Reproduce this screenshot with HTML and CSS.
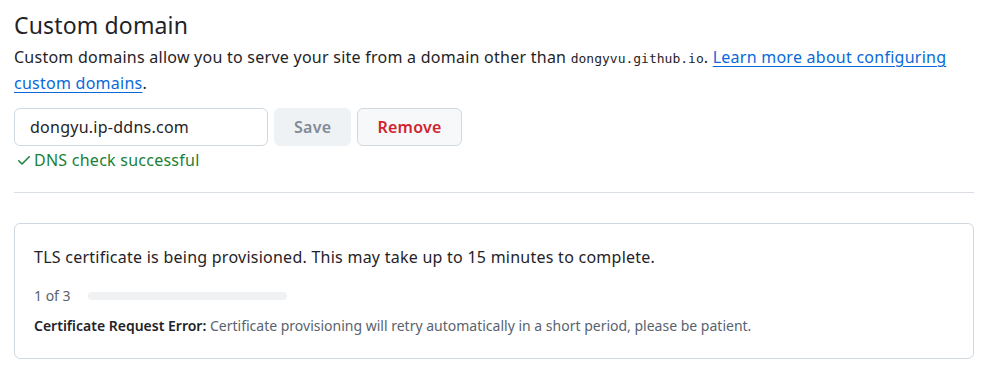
FILE: index.html
```html
<!DOCTYPE html>
<html lang="en">
<head>
  <meta charset="UTF-8">
  <title>Custom domain</title>
  <link rel="stylesheet" href="styles.css">
</head>
<body>
  <div class="container">
    <h2 class="title">Custom domain</h2>
    <p class="description">
      Custom domains allow you to serve your site from a domain other than <code>dongyvu.github.io</code>.
      <a href="#">Learn more about configuring custom domains</a>.
    </p>

    <form class="domain-form" onsubmit="return false;">
      <div class="domain-row">
        <input type="text" class="domain-input" value="dongyu.ip-ddns.com">
        <button type="submit" class="btn" disabled>Save</button>
        <button type="button" class="btn btn-danger">Remove</button>
      </div>
      <div class="dns-status">
        <svg class="check-icon" viewBox="0 0 16 16" width="16" height="16">
          <path d="M13.78 4.22a.75.75 0 0 1 0 1.06l-7.25 7.25a.75.75 0 0 1-1.06 0L2.22 9.28a.75.75 0 0 1 1.06-1.06L6 10.94l6.72-6.72a.75.75 0 0 1 1.06 0Z"></path>
        </svg>
        <span>DNS check successful</span>
      </div>
    </form>

    <hr class="divider">

    <div class="cert-box">
      <p class="cert-message">TLS certificate is being provisioned. This may take up to 15 minutes to complete.</p>
      <div class="cert-progress">
        <span class="step">1 of 3</span>
        <span class="progress-track"><span class="progress-fill" style="width: 0%"></span></span>
      </div>
      <p class="cert-error"><strong>Certificate Request Error:</strong> Certificate provisioning will retry automatically in a short period, please be patient.</p>
    </div>
  </div>
</body>
</html>
```

FILE: styles.css
```css
body {
  font-family: 'Noto Sans', 'Liberation Sans', Arial, sans-serif;
  margin: 0;
  background-color: #ffffff;
  color: #1f2328;
  letter-spacing: 0.25px;
}
.container {
  padding: 8px 8px 0 14px;
}
.title {
  margin: 0;
  font-size: 23px;
  font-weight: 400;
  line-height: 34px;
  letter-spacing: 0.15px;
}
.description {
  margin: 3px 0 12px;
  font-size: 16px;
  line-height: 25px;
}
.description code {
  font-family: 'DejaVu Sans Mono', 'Liberation Mono', monospace;
  font-size: 13px;
  letter-spacing: 0;
}
.description a {
  color: #0969da;
  text-decoration: underline;
  text-underline-offset: 3px;
}
.domain-row {
  display: flex;
  gap: 6px;
}
.domain-input {
  width: 254px;
  height: 38px;
  box-sizing: border-box;
  padding: 0 15px;
  border: 1px solid #d1d9e0;
  border-radius: 6px;
  font-family: inherit;
  font-size: 16px;
  letter-spacing: 0.25px;
  color: #1f2328;
  outline: none;
}
.btn {
  height: 38px;
  padding: 0 19px;
  background-color: #f6f8fa;
  border: 1px solid #d1d9e0;
  border-radius: 6px;
  font-family: inherit;
  font-size: 16px;
  font-weight: 600;
  letter-spacing: 0.25px;
  color: #1f2328;
}
.btn:disabled {
  width: 77px;
  color: #818b98;
  background-color: #eff2f5;
  border-color: #eff2f5;
}
.btn-danger {
  width: 105px;
  color: #d1242f;
}
.dns-status {
  display: flex;
  align-items: center;
  gap: 2px;
  margin-top: 3px;
  padding-left: 2px;
  font-size: 16px;
  line-height: 22px;
  color: #1a7f37;
}
.check-icon {
  fill: #1a7f37;
}
.divider {
  margin: 21px 0 30px;
  border: 0;
  border-top: 1px solid #d8dee4;
}
.cert-box {
  border: 1px solid #d1d9e0;
  border-radius: 6px;
  padding: 21px 19px 22px;
}
.cert-message {
  margin: 0 0 18px;
  font-size: 16px;
  line-height: 24px;
}
.cert-progress {
  display: flex;
  align-items: center;
  gap: 17px;
  font-size: 14px;
  line-height: 18px;
  letter-spacing: 0;
  color: #59636e;
}
.progress-track {
  width: 199px;
  height: 8px;
  border-radius: 4px;
  background-color: #eff1f3;
  overflow: hidden;
}
.progress-fill {
  display: block;
  height: 100%;
  background-color: #1f883d;
}
.cert-error {
  margin: 11px 0 0;
  font-size: 14px;
  line-height: 20px;
  letter-spacing: 0;
  color: #59636e;
}
.cert-error strong {
  font-weight: 600;
  color: #1f2328;
}
```
